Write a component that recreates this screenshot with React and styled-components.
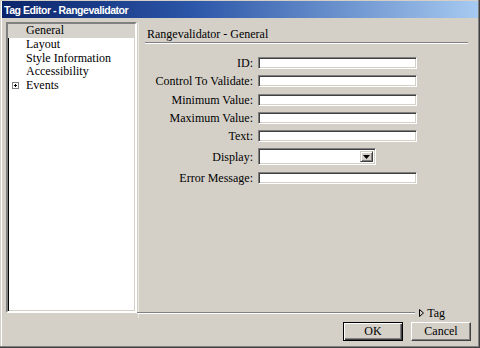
import React from "react";
import styled, { createGlobalStyle } from "styled-components";

const GlobalStyle = createGlobalStyle`
    html, body {
        margin: 0;
        padding: 0;
        background: #d4d0c8;
    }
    * {
        box-sizing: border-box;
    }
`;

const serif = `"Liberation Serif", "Times New Roman", serif`;

const Window = styled.div`
    width: 480px;
    height: 348px;
    background: #d4d0c8;
    padding: 1px 2px 0 2px;
    display: flex;
    flex-direction: column;
    font-family: ${serif};
    font-size: 12px;
    color: #000;
    box-shadow: inset -1px -1px #404040, inset -2px -2px #808080,
        inset 1px 1px #d4d0c8, inset 2px 2px #ffffff;
`;

const TitleBar = styled.div`
    height: 17px;
    flex: 0 0 17px;
    display: flex;
    align-items: center;
    padding-left: 2px;
    background: linear-gradient(to right, #0a246a 0%, #2c56a8 40%, #a6caf0 100%);
    color: #fff;
    font-family: "Liberation Sans", Arial, sans-serif;
    font-weight: bold;
    font-size: 10.5px;
    letter-spacing: -0.45px;
`;

const Main = styled.div`
    display: flex;
    margin: 4px 6px 0 4px;
    height: 296px;
    flex: 0 0 296px;
`;

const TreePanel = styled.div`
    width: 131px;
    height: 291px;
    align-self: flex-start;
    background: #fff;
    border: 2px solid;
    border-color: #808080 #ffffff #ffffff #808080;
    box-shadow: inset 1px 1px #000, inset -1px -1px #d4d0c8;
`;

const TreeItem = styled.div`
    display: flex;
    align-items: center;
    height: 13.7px;
    padding-left: 4px;
    background: ${(p) => (p.$selected ? "#d6d3cc" : "transparent")};
    white-space: nowrap;
`;

const Expander = styled.span`
    width: 14px;
    flex: 0 0 14px;
    display: flex;
    align-items: center;
`;

const PlusBox = styled.span`
    width: 7px;
    height: 7px;
    border: 1px solid #808080;
    position: relative;
    display: inline-block;

    &::before,
    &::after {
        content: "";
        position: absolute;
        background: #000;
    }
    &::before {
        left: 1px;
        top: 2px;
        width: 3px;
        height: 1px;
    }
    &::after {
        left: 2px;
        top: 1px;
        width: 1px;
        height: 3px;
    }
`;

const Content = styled.div`
    flex: 1;
    display: flex;
    flex-direction: column;
    margin-left: 1px;
    border-left: 1px solid #e8e6e0;
`;

const Heading = styled.div`
    padding: 5px 0 0 8px;
    line-height: 14px;
    height: 19px;
`;

const Etched = styled.div`
    height: 2px;
    border-top: 1px solid #808080;
    border-bottom: 1px solid #ffffff;
`;

const HeadingRule = styled(Etched)`
    margin: 1px 4px 0 6px;
`;

const Form = styled.div`
    display: grid;
    grid-template-columns: 114px 159px;
    column-gap: 5px;
    row-gap: 6.3px;
    align-items: center;
    margin-top: 13px;
`;

const Label = styled.label`
    text-align: right;
    line-height: 12px;
    white-space: nowrap;
`;

const TextBox = styled.div`
    height: 12px;
    width: ${(p) => p.$width || 159}px;
    background: #fff;
    border: 1px solid;
    border-color: #808080 #ffffff #ffffff #808080;
    box-shadow: inset 1px 1px #404040, inset -1px -1px #d4d0c8;
`;

const Select = styled(TextBox)`
    height: 17px;
    display: flex;
    justify-content: flex-end;
    align-items: stretch;
    padding: 2px;
`;

const DropButton = styled.div`
    width: 13px;
    background: #d4d0c8;
    border: 1px solid;
    border-color: #d4d0c8 #404040 #404040 #d4d0c8;
    box-shadow: inset 1px 1px #fff, inset -1px -1px #808080;
    display: flex;
    align-items: center;
    justify-content: center;
`;

const Spacer = styled.div`
    flex: 1;
`;

const TagBar = styled.div`
    display: flex;
    align-items: center;
    height: 10px;
    flex: 0 0 10px;
    margin-left: -2px;
    padding-right: 27px;
`;

const TagRule = styled(Etched)`
    flex: 1 1 auto;
    min-width: 100px;
`;

const TagToggle = styled.div`
    display: flex;
    align-items: center;
    gap: 3px;
    margin-left: 4px;
    line-height: 12px;
`;

const Footer = styled.div`
    display: flex;
    justify-content: flex-end;
    gap: 8px;
    padding: 4px 7px 0 0;
`;

const Button = styled.button`
    width: 60px;
    height: 19px;
    padding: 0;
    background: #d4d0c8;
    font-family: ${serif};
    font-size: 12px;
    color: #000;
    border: 1px solid;
    border-color: ${(p) =>
        p.$default ? "#000" : "#ffffff #404040 #404040 #ffffff"};
    box-shadow: ${(p) =>
        p.$default
            ? "inset 1px 1px #fff, inset -1px -1px #404040, inset -2px -2px #808080"
            : "inset -1px -1px #808080"};
`;

const fields = [
    "ID:",
    "Control To Validate:",
    "Minimum Value:",
    "Maximum Value:",
    "Text:",
];

const App = () => {
    return (
        <>
            <GlobalStyle />
            <Window>
                <TitleBar>Tag Editor - Rangevalidator</TitleBar>
                <Main>
                    <TreePanel>
                        <TreeItem $selected>
                            <Expander />
                            General
                        </TreeItem>
                        <TreeItem>
                            <Expander />
                            Layout
                        </TreeItem>
                        <TreeItem>
                            <Expander />
                            Style Information
                        </TreeItem>
                        <TreeItem>
                            <Expander />
                            Accessibility
                        </TreeItem>
                        <TreeItem>
                            <Expander>
                                <PlusBox />
                            </Expander>
                            Events
                        </TreeItem>
                    </TreePanel>
                    <Content>
                        <Heading>Rangevalidator - General</Heading>
                        <HeadingRule />
                        <Form>
                            {fields.map((f) => (
                                <React.Fragment key={f}>
                                    <Label>{f}</Label>
                                    <TextBox />
                                </React.Fragment>
                            ))}
                            <Label>Display:</Label>
                            <Select $width={118}>
                                <DropButton>
                                    <svg width="7" height="4" viewBox="0 0 7 4">
                                        <path d="M0 0h7L3.5 4z" fill="#000" />
                                    </svg>
                                </DropButton>
                            </Select>
                            <Label>Error Message:</Label>
                            <TextBox />
                        </Form>
                        <Spacer />
                        <TagBar>
                            <TagRule />
                            <TagToggle>
                                <svg width="5" height="8" viewBox="0 0 5 8">
                                    <path
                                        d="M0.5 0.5L4.5 4L0.5 7.5z"
                                        fill="none"
                                        stroke="#000"
                                        strokeWidth="1"
                                    />
                                </svg>
                                Tag
                            </TagToggle>
                        </TagBar>
                    </Content>
                </Main>
                <Footer>
                    <Button $default>OK</Button>
                    <Button>Cancel</Button>
                </Footer>
            </Window>
        </>
    );
};

export default App;
